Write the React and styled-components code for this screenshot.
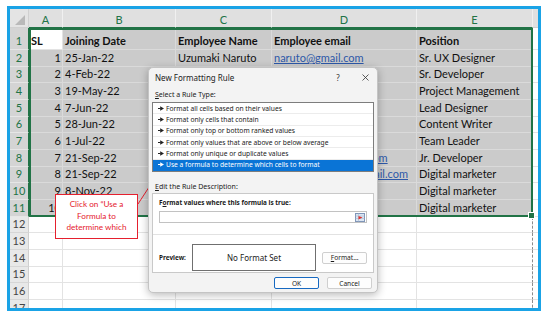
import React from 'react';
import styled, { createGlobalStyle } from 'styled-components';

const Global = createGlobalStyle`
  html, body { margin: 0; padding: 0; background: #fff; }
  body { font-family: Lato, "Noto Sans", sans-serif; }
`;

const Frame = styled.div`
  position: relative;
  box-sizing: border-box;
  margin: 6px 0 0 7px;
  width: 534px;
  height: 305px;
  border: 3px solid #1aa3e6;
  overflow: hidden;
  background: #fff;
`;

const Sheet = styled.div`
  display: grid;
  grid-template-columns: 19px 34px 113px 96px 145px 116px 1fr;
  grid-template-rows: 19px 22px repeat(16, 16.67px);
  font-family: Lato, "Liberation Sans", sans-serif;
  font-size: 11px;
  color: #111;
`;

const Corner = styled.div`
  position: relative;
  background: #e4e4e4;
  border-right: 1px solid #d0d0d0;
  border-bottom: 1px solid #d0d0d0;
  &::after {
    content: '';
    position: absolute;
    right: 3px;
    bottom: 2px;
    width: 10px;
    height: 10px;
    background: #b9b9b9;
    clip-path: polygon(100% 0, 100% 100%, 0 100%);
  }
`;

const ColHead = styled.div`
  box-sizing: border-box;
  display: flex;
  align-items: center;
  justify-content: center;
  padding-top: 2px;
  background: #e0e0e0;
  border-right: 1px solid #f0f0f0;
  border-bottom: 1px solid ${p => (p.$sel ? '#217346' : '#cfcfcf')};
  color: ${p => (p.$sel ? '#217346' : '#555')};
  font-size: 11px;
`;

const RowHead = styled.div`
  box-sizing: border-box;
  display: flex;
  align-items: flex-end;
  justify-content: center;
  padding-bottom: 1px;
  line-height: 14px;
  background: ${p => (p.$sel ? '#d4d4d4' : '#e8e8e8')};
  border-right: 1px solid ${p => (p.$sel ? '#217346' : '#cfcfcf')};
  border-bottom: 1px solid ${p => (p.$sel ? '#e6e6e6' : '#d6d6d6')};
  color: ${p => (p.$sel ? '#217346' : '#444')};
  font-size: 11px;
`;

const Cell = styled.div`
  box-sizing: border-box;
  display: flex;
  align-items: flex-end;
  justify-content: ${p => (p.$right ? 'flex-end' : 'flex-start')};
  padding: 0 ${p => (p.$right ? 1 : 3)}px 1px 2px;
  line-height: 14px;
  white-space: nowrap;
  overflow: hidden;
  background: ${p => (p.$active ? '#fff' : p.$sel ? '#cbcbcb' : '#fff')};
  border-right: 1px ${p => (p.$dash ? 'dashed #8c8c8c' : `solid ${p.$sel ? '#dadada' : '#e3e3e3'}`)};
  border-bottom: 1px solid ${p => (p.$sel ? '#dadada' : '#e3e3e3')};
  font-weight: ${p => (p.$bold ? 700 : 400)};
`;

const Link = styled.span`
  color: #2d58a8;
  text-decoration: underline;
  text-underline-offset: 1px;
`;

const Selection = styled.div`
  position: absolute;
  left: 19px;
  top: 19px;
  width: 504px;
  height: 189px;
  box-sizing: border-box;
  border: 2px solid #217346;
  pointer-events: none;
  &::after {
    content: '';
    position: absolute;
    right: -4px;
    bottom: -4px;
    width: 5px;
    height: 5px;
    background: #217346;
    border: 1px solid #fff;
  }
`;

/* ---------- Dialog ---------- */

const Dialog = styled.div`
  position: absolute;
  left: 138px;
  top: 58px;
  width: 230px;
  height: 226px;
  box-sizing: border-box;
  background: #f3f3f3;
  border: 1px solid #c4c4c4;
  border-radius: 5px;
  box-shadow: 0 2px 9px rgba(0, 0, 0, 0.28);
  font-family: "Noto Sans", "Open Sans", sans-serif;
  color: #1a1a1a;
  display: flex;
  flex-direction: column;
  padding: 0 2px 0 3px;
`;

const TitleBar = styled.div`
  height: 18px;
  display: flex;
  align-items: center;
  padding-left: 3px;
  font-size: 8px;
  color: #222;
`;

const TitleText = styled.span`
  flex: 1;
`;

const TitleBtn = styled.span`
  width: 20px;
  margin-right: ${p => p.$mr || 0}px;
  display: flex;
  justify-content: center;
  font-size: 8px;
  color: #333;
`;

const Label = styled.div`
  box-sizing: border-box;
  height: ${p => p.$h}px;
  padding: ${p => p.$pt}px 0 0 3px;
  font-size: 7px;
  line-height: 10px;
  color: #1a1a1a;
`;

const U = styled.span`
  text-decoration: underline;
  text-underline-offset: 1px;
`;

const ListBox = styled.div`
  box-sizing: border-box;
  height: 70px;
  margin-right: 1px;
  background: #fff;
  border: 1px solid #7d7d7d;
  display: flex;
  flex-direction: column;
`;

const Item = styled.div`
  box-sizing: border-box;
  height: 11.4px;
  display: flex;
  align-items: center;
  gap: 2px;
  padding-left: 5px;
  font-size: 6.7px;
  white-space: nowrap;
  background: ${p => (p.$sel ? '#0a74d6' : '#fff')};
  color: ${p => (p.$sel ? '#fff' : '#1a1a1a')};
  border-bottom: 1px solid ${p => (p.$sel ? '#0a74d6' : '#ececec')};
`;

const DescBox = styled.div`
  box-sizing: border-box;
  height: 80px;
  margin-right: 1px;
  background: #fff;
  border: 1px solid #c9c9c9;
  display: flex;
  flex-direction: column;
`;

const DescLabel = styled.div`
  padding: 4px 0 0 6px;
  font-size: 6.4px;
  line-height: 10px;
  font-weight: 700;
`;

const Input = styled.div`
  margin: 3px 6px 0 6px;
  height: 12px;
  box-sizing: border-box;
  border: 1px solid #c2c2c2;
  background: #fff;
  display: flex;
  justify-content: flex-end;
  align-items: center;
`;

const Separator = styled.div`
  margin-top: 11px;
  height: 1px;
  background: #e2e2e2;
`;

const PreviewRow = styled.div`
  display: flex;
  align-items: center;
  padding: 9px 6px 0 6px;
`;

const PreviewLabel = styled.span`
  width: 33px;
  font-size: 6.4px;
  font-weight: 700;
`;

const PreviewBox = styled.div`
  width: 125px;
  height: 27px;
  box-sizing: border-box;
  border: 1.5px solid #6f6f6f;
  background: #fff;
  display: flex;
  align-items: center;
  justify-content: center;
  font-size: 8px;
  color: #222;
`;

const Button = styled.div`
  width: 45px;
  height: 12px;
  box-sizing: border-box;
  display: flex;
  align-items: center;
  justify-content: center;
  margin-left: ${p => p.$ml || 0}px;
  border: ${p => (p.$primary ? '1.5px solid #1669c1' : '1px solid #cfcfcf')};
  border-radius: 2px;
  background: #fdfdfd;
  font-size: 6.6px;
  color: #1a1a1a;
`;

const ButtonRow = styled.div`
  display: flex;
  justify-content: flex-end;
  gap: 8px;
  padding: 4px 3px 0 0;
`;

/* ---------- Callout ---------- */

const Callout = styled.div`
  position: absolute;
  left: 45px;
  top: 185px;
  width: 83px;
  height: 45px;
  box-sizing: border-box;
  background: #fff;
  border: 1px solid #e5202e;
  color: #e5202e;
  font-family: Lato, "Liberation Sans", sans-serif;
  font-size: 8.2px;
  line-height: 11.6px;
  text-align: center;
  padding-top: 4px;
`;

const Overlay = styled.svg`
  position: absolute;
  left: 0;
  top: 0;
  pointer-events: none;
`;

const Arrow = ({ white }) => (
  <svg width="6" height="5" viewBox="0 0 6 5">
    <rect x="0" y="2" width="2.5" height="1" fill={white ? '#fff' : '#222'} />
    <polygon points="2.2,0.3 6,2.5 2.2,4.7" fill={white ? '#fff' : '#222'} />
  </svg>
);

const RangeIcon = () => (
  <svg width="10" height="9" viewBox="0 0 10 9" style={{ marginRight: 1 }}>
    <rect x="0.5" y="0.5" width="9" height="8" fill="#dbe5f2" stroke="#8096b8" />
    <line x1="0.5" y1="3" x2="9.5" y2="3" stroke="#a8b8d0" strokeWidth="0.6" />
    <line x1="0.5" y1="5.5" x2="9.5" y2="5.5" stroke="#a8b8d0" strokeWidth="0.6" />
    <line x1="3.5" y1="0.5" x2="3.5" y2="8.5" stroke="#a8b8d0" strokeWidth="0.6" />
    <polygon points="3.5,3 7.5,4.5 3.5,6.5" fill="#e0302a" />
  </svg>
);

/* Cells fully hidden behind the dialog or the callout are left empty. */
const data = [
  ['1', '25-Jan-22', 'Uzumaki Naruto', 'naruto@gmail.com', 'Sr. UX Designer'],
  ['2', '4-Feb-22', '', '', 'Sr. Developer'],
  ['3', '19-May-22', '', '', 'Project Management'],
  ['4', '7-Jun-22', '', '', 'Lead Designer'],
  ['5', '28-Jun-22', '', '', 'Content Writer'],
  ['6', '1-Jul-22', '', '', 'Team Leader'],
  ['7', '21-Sep-22', '', 'gaara.sands@gmail.com', 'Jr. Developer'],
  ['8', '21-Sep-22', '', 'madara.uchiha1@gmail.com', 'Digital marketer'],
  ['9', '8-Nov-22', '', '', 'Digital marketer'],
  ['10', '', '', '', 'Digital marketer'],
];

const rules = [
  'Format all cells based on their values',
  'Format only cells that contain',
  'Format only top or bottom ranked values',
  'Format only values that are above or below average',
  'Format only unique or duplicate values',
  'Use a formula to determine which cells to format',
];

export default function App() {
  const cols = ['A', 'B', 'C', 'D', 'E', ''];
  return (
    <>
      <Global />
      <Frame>
        <Sheet>
          <Corner />
          {cols.map((c, i) => (
            <ColHead key={i} $sel={i < 5}>{c}</ColHead>
          ))}

          <RowHead $sel>1</RowHead>
          <Cell $active $bold>SL</Cell>
          <Cell $sel $bold>Joining Date</Cell>
          <Cell $sel $bold>Employee Name</Cell>
          <Cell $sel $bold>Employee email</Cell>
          <Cell $sel $bold>Position</Cell>
          <Cell />

          {data.map((r, i) => (
            <React.Fragment key={i}>
              <RowHead $sel>{i + 2}</RowHead>
              <Cell $sel $right>{r[0]}</Cell>
              <Cell $sel>{r[1]}</Cell>
              <Cell $sel>{r[2]}</Cell>
              <Cell $sel>{r[3] && <Link>{r[3]}</Link>}</Cell>
              <Cell $sel>{r[4]}</Cell>
              <Cell />
            </React.Fragment>
          ))}

          {[12, 13, 14, 15, 16, 17].map(n => (
            <React.Fragment key={n}>
              <RowHead>{n}</RowHead>
              <Cell />
              <Cell />
              <Cell />
              <Cell />
              <Cell $dash />
              <Cell />
            </React.Fragment>
          ))}
        </Sheet>

        <Selection />

        <Callout>
          Click on “Use a<br />
          Formula to<br />
          determine which
        </Callout>

        <Overlay width="528" height="299" viewBox="0 0 528 299">
          <line x1="128" y1="195" x2="151.5" y2="159" stroke="#e5202e" strokeWidth="1" />
          <polygon points="153,156.5 152.6,161 149,158.6" fill="#e5202e" />
        </Overlay>

        <Dialog>
          <TitleBar>
            <TitleText>New Formatting Rule</TitleText>
            <TitleBtn $mr={7}>?</TitleBtn>
            <TitleBtn>
              <svg width="7" height="7" viewBox="0 0 7 7">
                <path d="M0.5 0.5 L6.5 6.5 M6.5 0.5 L0.5 6.5" stroke="#333" strokeWidth="0.8" />
              </svg>
            </TitleBtn>
          </TitleBar>

          <Label $h={16} $pt={4}><U>S</U>elect a Rule Type:</Label>
          <ListBox>
            {rules.map((t, i) => (
              <Item key={i} $sel={i === 5}>
                <Arrow white={i === 5} />
                <span>{t}</span>
              </Item>
            ))}
          </ListBox>

          <Label $h={21} $pt={10}><U>E</U>dit the Rule Description:</Label>
          <DescBox>
            <DescLabel>F<U>o</U>rmat values where this formula is true:</DescLabel>
            <Input><RangeIcon /></Input>
            <Separator />
            <PreviewRow>
              <PreviewLabel>Preview:</PreviewLabel>
              <PreviewBox>No Format Set</PreviewBox>
              <Button $ml={6}><U>F</U>ormat...</Button>
            </PreviewRow>
          </DescBox>

          <ButtonRow>
            <Button $primary>OK</Button>
            <Button>Cancel</Button>
          </ButtonRow>
        </Dialog>
      </Frame>
    </>
  );
}
